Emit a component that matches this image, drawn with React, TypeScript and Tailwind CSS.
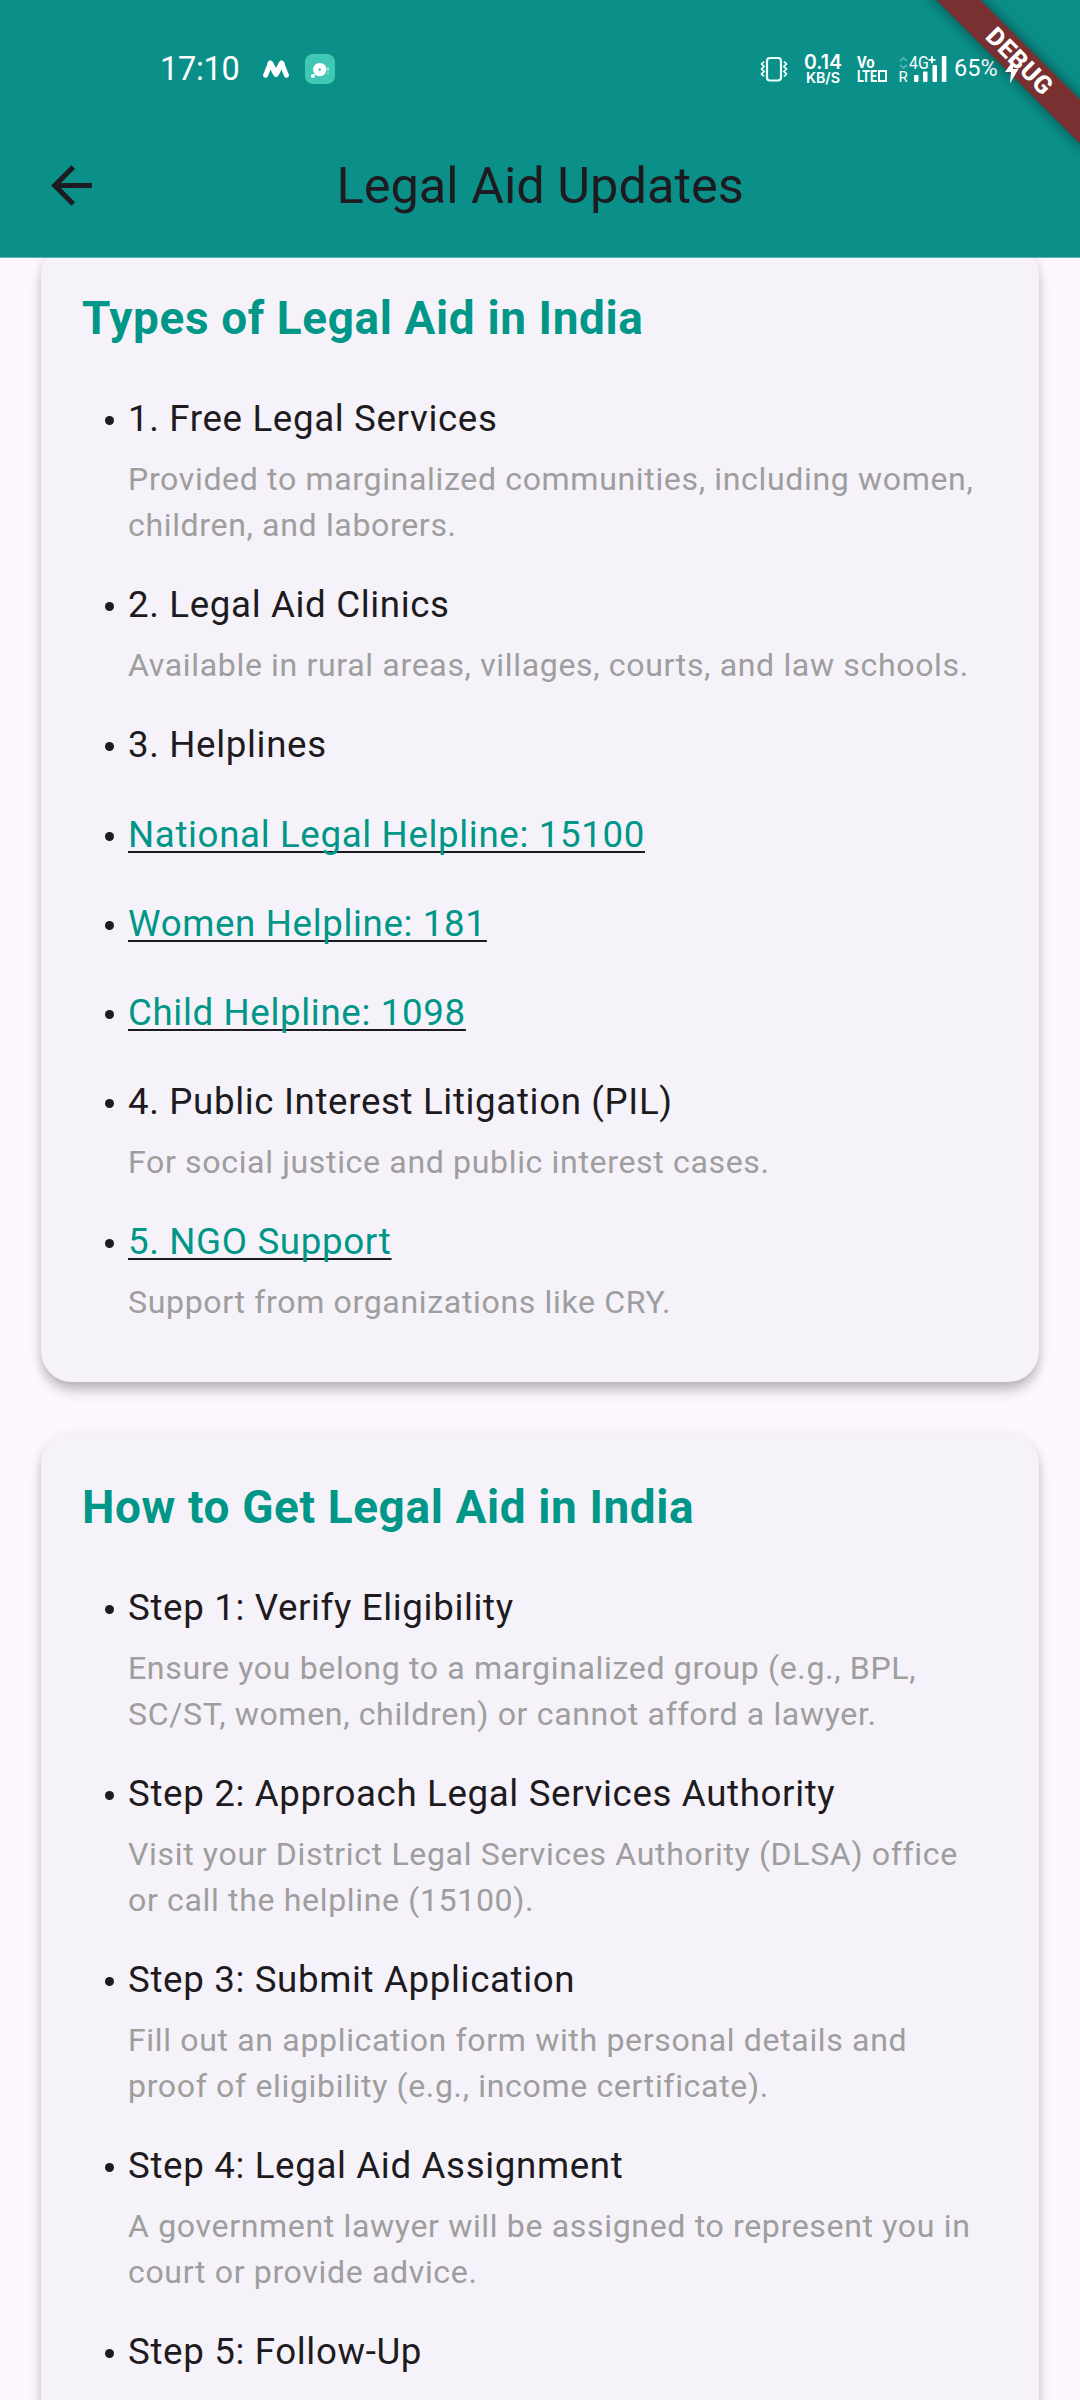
import React from "react";

type Item = { title: string; sub?: string[]; link?: boolean };

const TYPES: Item[] = [
  { title: "1. Free Legal Services", sub: ["Provided to marginalized communities, including women,", "children, and laborers."] },
  { title: "2. Legal Aid Clinics", sub: ["Available in rural areas, villages, courts, and law schools."] },
  { title: "3. Helplines" },
  { title: "National Legal Helpline: 15100", link: true },
  { title: "Women Helpline: 181", link: true },
  { title: "Child Helpline: 1098", link: true },
  { title: "4. Public Interest Litigation (PIL)", sub: ["For social justice and public interest cases."] },
  { title: "5. NGO Support", link: true, sub: ["Support from organizations like CRY."] },
];

const STEPS: Item[] = [
  { title: "Step 1: Verify Eligibility", sub: ["Ensure you belong to a marginalized group (e.g., BPL,", "SC/ST, women, children) or cannot afford a lawyer."] },
  { title: "Step 2: Approach Legal Services Authority", sub: ["Visit your District Legal Services Authority (DLSA) office", "or call the helpline (15100)."] },
  { title: "Step 3: Submit Application", sub: ["Fill out an application form with personal details and", "proof of eligibility (e.g., income certificate)."] },
  { title: "Step 4: Legal Aid Assignment", sub: ["A government lawyer will be assigned to represent you in", "court or provide advice."] },
  { title: "Step 5: Follow-Up" },
];

function Row({ item }: { item: Item }) {
  return (
    <li className="flex pb-[28.6px]">
      <span className="ml-[23px] mt-[25px] size-[9px] shrink-0 rounded-full bg-[#1d1b20]" />
      <div className="ml-[14px] whitespace-nowrap">
        <div className="h-[60.6px] text-[36.7px] leading-[56px] tracking-[0.64px] text-[#1d1b20]">
          {item.link ? (
            <span className="underline decoration-[#1d1b20] decoration-2 underline-offset-[4px] [text-decoration-skip-ink:none]">
              <a className="text-[#009688]">{item.title}</a>
            </span>
          ) : (
            item.title
          )}
        </div>
        {item.sub && (
          <div className="mt-[5.2px] text-[32.1px] leading-[45.8px] tracking-[0.64px] text-[#9e9e9e]">
            {item.sub.map((line) => (
              <div key={line}>{line}</div>
            ))}
          </div>
        )}
      </div>
    </li>
  );
}

function Card({ title, items }: { title: string; items: Item[] }) {
  return (
    <section className="rounded-[31px] bg-[#f6f2f9] px-[41px] pt-[41.5px] pb-[27.6px] shadow-[0_10px_14px_-2px_rgba(0,0,0,0.22),0_3px_11px_rgba(0,0,0,0.12)]">
      <h2 className="h-[66px] whitespace-nowrap text-[45.9px] leading-[66px] font-bold tracking-[0.64px] text-[#009688]">{title}</h2>
      <ul className="pt-[40.3px]">
        {items.map((i) => (
          <Row key={i.title} item={i} />
        ))}
      </ul>
    </section>
  );
}

function StatusBar() {
  return (
    <div className="flex h-[138px] items-center text-white">
      <span className="ml-[160px] w-[80px] shrink-0 text-[32.5px] leading-none tracking-[-0.3px]">17:10</span>
      <svg viewBox="0 0 28 20" className="ml-[22px] h-[20px] w-[28px] shrink-0" fill="none" stroke="#fff" strokeLinecap="round" strokeLinejoin="round">
        <path d="M3.6 16.2 8.4 4.2 14 15 19.6 4.2 24.4 16.2" strokeWidth="5" />
        <path d="M8.4 4.5 14 15 19.6 4.5" strokeWidth="5.6" />
      </svg>
      <svg viewBox="0 0 30 30" className="ml-[15px] size-[30px] shrink-0">
        <rect width="30" height="30" rx="8" fill="#3fc9b5" />
        <circle cx="14.7" cy="15.6" r="6.7" fill="#fff" />
        <circle cx="14.7" cy="15.6" r="1.3" fill="#3fc9b5" />
        <circle cx="8" cy="22" r="2.1" fill="#fff" />
        <path d="M23 13v4M23 18.4v1.4" stroke="#d4f5ef" strokeWidth="1.2" />
      </svg>
      <svg viewBox="0 0 28 26" className="ml-[425px] h-[26px] w-[28px] shrink-0" fill="none" stroke="#e9fffc">
        <rect x="7" y="2" width="14" height="22.5" rx="3" strokeWidth="2.2" />
        <path d="M4 5.5 1.6 8 4 10.5 1.6 13 4 15.5 1.6 18 4 20.5M24 5.5 26.4 8 24 10.5 26.4 13 24 15.5 26.4 18 24 20.5" strokeWidth="1.8" />
      </svg>
      <div className="ml-[16px] flex w-[38px] shrink-0 flex-col items-center font-['Inter',sans-serif]">
        <span className="text-[19.5px] leading-[16px] font-semibold">0.14</span>
        <span className="mt-[1px] text-[14.3px] leading-[14px] font-semibold">KB/S</span>
      </div>
      <div className="ml-[15px] flex w-[31px] shrink-0 flex-col gap-px">
        <span className="origin-left scale-x-[0.87] text-[17px] leading-[13px] font-bold">Vo</span>
        <div className="flex items-end">
          <span className="w-[21px] origin-left scale-x-[0.77] text-[16px] leading-[13px] font-bold">LTE</span>
          <span className="mb-[1px] h-[12px] w-[9px] border-[2.5px] border-white" />
        </div>
      </div>
      <div className="ml-[10px] flex h-[27px] w-[10px] shrink-0 flex-col items-center justify-between">
        <svg viewBox="0 0 9 14" className="h-[14px] w-[9px] shrink-0" fill="none" stroke="#4fb5ae" strokeWidth="2">
          <path d="M1 5 4.5 2 8 5M1 9 4.5 12 8 9" />
        </svg>
        <span className="text-[15px] leading-[12px]">R</span>
      </div>
      <div className="relative ml-[2px] h-[27px] w-[38px] shrink-0">
        <svg viewBox="0 0 38 27" className="h-[27px] w-[38px]" fill="#fff">
          <rect x="4" y="19" width="4.5" height="7" rx="1" />
          <rect x="13" y="15.5" width="4.5" height="10.5" rx="1" />
          <rect x="22.5" y="9" width="4.5" height="17" rx="1" />
          <rect x="31.8" y="0" width="4.6" height="26" rx="1" />
          <path d="M22 0.3v7M18.500 3.800h7" stroke="#fff" strokeWidth="1.8" />
        </svg>
        <span className="absolute -left-[1.5px] -top-[0.5px] origin-left scale-x-[0.88] text-[18px] leading-[16px]">4G</span>
      </div>
      <span className="ml-[6px] w-[48px] text-[23.5px] leading-none">65%</span>
    </div>
  );
}

export default function App() {
  return (
    <div className="relative flex h-[2400px] w-[1080px] flex-col overflow-hidden bg-[#fef7ff] font-['Roboto',sans-serif]">
      <header className="z-10 h-[258px] shrink-0 border-b border-[#5fb3ae] bg-[#0a9089]">
        <StatusBar />
        <div className="flex h-[95px] items-center">
          <svg viewBox="0 0 24 24" className="ml-[41px] size-[61px]" fill="#1d1b20">
            <path d="M20 11H7.83l5.59-5.59L12 4l-8 8 8 8 1.41-1.41L7.83 13H20z" />
          </svg>
          <h1 className="ml-[234.5px] whitespace-nowrap text-[50.5px] text-[#1d1b20]">Legal Aid Updates</h1>
        </div>
      </header>
      <main className="-mt-[14.5px] flex flex-col gap-[50.5px] px-[41px]">
        <Card title="Types of Legal Aid in India" items={TYPES} />
        <Card title="How to Get Legal Aid in India" items={STEPS} />
      </main>
      <div className="absolute left-[909px] top-[45.4px] z-20 flex h-[31px] w-[220px] rotate-45 items-center justify-center bg-[#783030] pl-[2px] text-[25px] leading-none font-extrabold tracking-[0.7px] text-white shadow-[0_0_15px_rgba(0,0,0,0.5)]">
        DEBUG
      </div>
      <svg viewBox="0 0 14 24" className="absolute left-[1005px] top-[60px] z-30 h-[24px] w-[14px]" fill="#fff">
        <path d="M8.5 0 0 12h6L5 23.5 13.5 9H8z" />
      </svg>
    </div>
  );
}
